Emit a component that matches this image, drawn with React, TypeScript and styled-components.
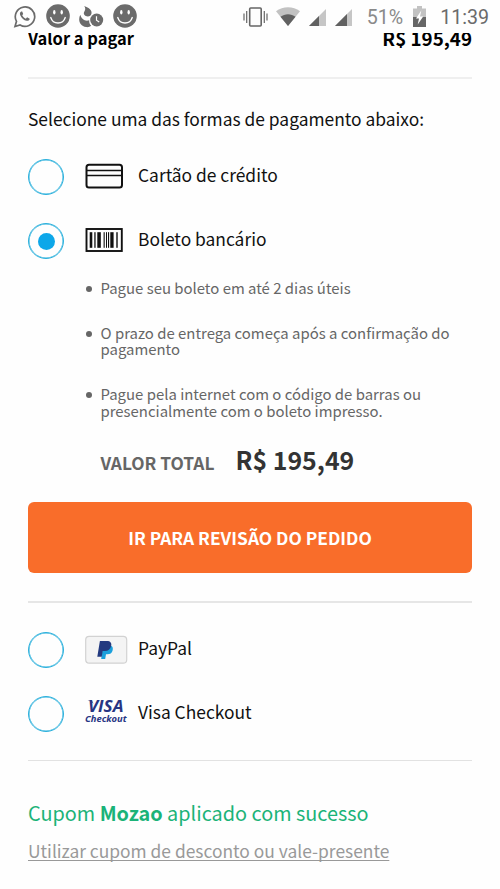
import React from 'react';
import styled, { createGlobalStyle } from 'styled-components';

const Global = createGlobalStyle`
  * { box-sizing: border-box; }
  html, body { margin: 0; padding: 0; background: #fefefe; }
  body { font-family: "Noto Sans CJK SC", "Noto Sans", sans-serif; color: #111; }
  svg { display: block; }
`;

const Page = styled.main`
  width: 500px;
  height: 889px;
  overflow: hidden;
  background: #fefefe;
`;

const StatusBar = styled.header`
  height: 33px;
  display: flex;
  justify-content: space-between;
  padding: 0 11px 0 13px;
  color: #6b6b6b;
`;

const StatusGroup = styled.div`
  display: flex;
  align-items: flex-start;
`;

const StatusIcon = styled.svg<{ $gap: number; $top: number }>`
  flex: none;
  margin: ${(p) => p.$top}px 0 0 ${(p) => p.$gap}px;
`;

const StatusText = styled.span<{ $gap: number; $color: string }>`
  font: 400 19.6px/35px Roboto, sans-serif;
  margin-left: ${(p) => p.$gap}px;
  color: ${(p) => p.$color};
`;

const Content = styled.div`
  padding: 0 28px;
`;

const Text = styled.span<{ $size: number; $weight?: number; $color?: string }>`
  display: block;
  white-space: nowrap;
  font-size: ${(p) => p.$size}px;
  font-weight: ${(p) => p.$weight ?? 400};
  color: ${(p) => p.$color ?? '#111'};
`;

const Summary = styled.div`
  height: 44px;
  overflow: hidden;
  display: flex;
  justify-content: space-between;
  line-height: 10px;
`;

const Divider = styled.hr<{ $height: number; $color: string; $space?: number }>`
  border: 0;
  margin: ${(p) => p.$space ?? 0}px 0;
  height: ${(p) => p.$height}px;
  background: ${(p) => p.$color};
`;

const Prompt = styled.div`
  padding-top: 26px;
  height: 80px;
  line-height: 28px;
`;

const Options = styled.div`
  display: grid;
  row-gap: 28px;
`;

const Option = styled.label`
  display: flex;
  align-items: center;
  height: 36px;
  line-height: 30px;
`;

const Radio = styled.span`
  display: grid;
  place-items: center;
  width: 36px;
  height: 36px;
  border: 1px solid #2ab0dc;
  box-shadow: inset 0 0 0 0.5px #2ab0dc;
  border-radius: 50%;
`;

const RadioDot = styled.i`
  width: 17px;
  height: 17px;
  border-radius: 50%;
  background: #0da7e9;
`;

const IconSlot = styled.span`
  width: 52px;
  margin-left: 21px;
  margin-right: 1px;
  height: 30px;
`;

const OptionLabel = styled.div`
  padding-bottom: 5px;
`;

const Details = styled.ul`
  list-style: none;
  margin: 21px 0 0;
  padding: 0 0 0 58px;
  display: grid;
  row-gap: 28px;
`;

const Detail = styled.li`
  display: grid;
  grid-template-columns: 14.5px 1fr;
  line-height: 16.7px;
`;

const Bullet = styled.i`
  width: 6px;
  height: 6px;
  border-radius: 50%;
  background: #666;
  margin-top: 6px;
`;

const Total = styled.div`
  display: flex;
  align-items: baseline;
  gap: 21px;
  padding-left: 72.5px;
  margin-top: 17px;
  line-height: 44px;
  height: 65px;
`;

const SubmitButton = styled.button`
  display: block;
  width: 444px;
  height: 71px;
  border: 0;
  padding: 0;
  border-radius: 6px;
  background: #f96d2a;
  font-family: inherit;
  text-align: center;
  line-height: 71px;
`;

const Coupon = styled.section`
  line-height: 30px;
  padding-top: 10px;
`;

const CouponLink = styled.a`
  display: block;
  margin-top: 7.4px;
  text-decoration: underline;
  text-decoration-color: #999;
  text-decoration-thickness: 1px;
  text-underline-offset: 2px;
  text-decoration-skip-ink: none;
  color: #999;
`;

const Smiley = ({ gap }: { gap: number }) => (
  <StatusIcon $gap={gap} $top={4} width="24" height="24" viewBox="0 0 24 24">
    <circle cx="12" cy="12" r="11.8" fill="#6b6b6b" />
    <ellipse cx="8.3" cy="8.3" rx="1.2" ry="2.2" fill="#fff" />
    <ellipse cx="15.7" cy="8.3" rx="1.2" ry="2.2" fill="#fff" />
    <path d="M4.8 13.6c1.1 3.5 3.9 5.4 7.2 5.4s6.1-1.9 7.2-5.4" fill="none" stroke="#fff" strokeWidth="1.5" strokeLinecap="round" />
  </StatusIcon>
);

const Signal = ({ gap, split }: { gap: number; split: number }) => (
  <StatusIcon $gap={gap} $top={9} width="17" height="17" viewBox="0 0 17 17">
    <path d="M0 17L17 0v17z" fill="#c6c6c6" />
    <path d={`M0 17L${split} ${17 - split}V17z`} fill="#616161" />
  </StatusIcon>
);

const CardIcon = () => (
  <svg width="38" height="30" viewBox="0 0 38 30" fill="none" stroke="#111">
    <rect x="1.5" y="2.7" width="35.5" height="22.7" rx="2.5" strokeWidth="2" />
    <path d="M2 8.5h35M2 13.5h35" strokeWidth="1.4" />
  </svg>
);

const barcode: [number, number][] = [
  [4.7, 2.6], [9.3, 1.3], [12.3, 3.5], [18.6, 1.1], [21, 1], [23, 1.1], [25.3, 3.3], [31.3, 1.4],
];

const BarcodeIcon = () => (
  <svg width="38" height="30" viewBox="0 0 38 30">
    <rect x="1.5" y="3" width="35.3" height="22" fill="none" stroke="#111" strokeWidth="1.9" />
    {barcode.map(([x, w]) => (
      <rect key={x} x={x} y="6.2" width={w} height="15.6" fill="#111" />
    ))}
  </svg>
);

const PayPalIcon = () => (
  <svg width="43" height="30" viewBox="0 0 43 30">
    <rect x="0.7" y="1.4" width="41" height="26.8" rx="3.5" fill="#f4f4f4" stroke="#d2d2d2" strokeWidth="1.2" />
    <path d="M18 10.5h6c3.3 0 4.4 2 3.6 4.9-.8 2.7-2.4 3.8-5.2 3.8H21l-.8 4.9h-4z" fill="#1ba0dc" />
    <path d="M14.9 6h6.8c3.8 0 5.3 2 4.4 5.2-.8 3.2-2.9 4.8-6.2 4.8h-2.2l-1 5.7h-4.4z" fill="#233a80" />
  </svg>
);

const VisaIcon = () => (
  <svg width="43" height="30" viewBox="0 0 43 30" fill="#273583">
    <path d="M2.6 1.6h4.2l1.8 3.2C6.8 3 5 2 2.6 1.6z" />
    <text x="3" y="13.2" fontFamily="Open Sans" fontWeight="700" fontStyle="italic" fontSize="16.5" textLength="35.5" lengthAdjust="spacingAndGlyphs">VISA</text>
    <text x="0" y="23.2" fontFamily="Open Sans" fontWeight="700" fontStyle="italic" fontSize="9.5" textLength="41.5" lengthAdjust="spacingAndGlyphs">Checkout</text>
  </svg>
);

type OptionProps = { label: string; icon: React.ReactNode; selected?: boolean };

const PaymentOption = ({ label, icon, selected }: OptionProps) => (
  <Option>
    <Radio>{selected && <RadioDot />}</Radio>
    <IconSlot>{icon}</IconSlot>
    <OptionLabel><Text $size={17.4}>{label}</Text></OptionLabel>
  </Option>
);

const details = [
  ['Pague seu boleto em até 2 dias úteis'],
  ['O prazo de entrega começa após a confirmação do', 'pagamento'],
  ['Pague pela internet com o código de barras ou', 'presencialmente com o boleto impresso.'],
];

export default function App() {
  return (
    <Page>
      <Global />
      <StatusBar>
        <StatusGroup>
          <StatusIcon $gap={0} $top={5} width="24" height="23" viewBox="0 0 24 23" fill="none" stroke="#6b6b6b">
            <path d="M2 21.5l1.5-5.2A9.7 9.7 0 1 1 7.1 20z" strokeWidth="1.7" />
            <path d="M8.2 6.4c-1.5.8-1.6 2.3-.8 4 1.4 2.9 3.5 4.7 6.2 5.4 1.6.3 3-.6 3.1-2.1l-2.6-1.4-1.3 1.4c-1.7-.7-2.9-1.8-3.6-3.4l1-1.2-1-2.7z" fill="#6b6b6b" stroke="none" />
          </StatusIcon>
          <Smiley gap={9} />
          <StatusIcon $gap={9} $top={6} width="25" height="22" viewBox="0 0 25 22" fill="#6b6b6b">
            <path d="M5.2 0c5 1.6 8 4.3 7.3 7.6-.5 2.4-3 3.7-5.8 2.5C4.5 9 4.3 7 5.6 5.1 6.6 3.5 6.4 1.8 5.2 0z" />
            <path d="M1.3 8.8c-2.6 5.2-.6 11.6 5.8 12.3 2.2.2 4-.3 5.1-1.3-1.6-1.6-2.2-3.2-2-5.6-3.6 1.6-7.7-.8-8.9-5.4z" />
            <circle cx="17.7" cy="14" r="6.5" />
            <path d="M17.5 10.3v4l2.7 1.8" fill="none" stroke="#fff" strokeWidth="1.2" />
          </StatusIcon>
          <Smiley gap={9} />
        </StatusGroup>
        <StatusGroup>
          <StatusIcon $gap={0} $top={7} width="25" height="20" viewBox="0 0 25 20" fill="none" stroke="#666">
            <rect x="6.7" y="1" width="11.5" height="18" rx="1" strokeWidth="1.6" />
            <path d="M1 6.5v7M3.7 4v12M21.3 4v12M24 6.5v7" strokeWidth="1.2" />
          </StatusIcon>
          <StatusIcon $gap={8} $top={7} width="24" height="19" viewBox="0 0 24 19">
            <path d="M0 4.3C7-1.2 17-1.2 24 4.3L12 19z" fill="#c2c2c2" />
            <path d="M4.5 9.7c4.4-3.4 10.6-3.4 15 0L12 19z" fill="#616161" />
          </StatusIcon>
          <Signal gap={9} split={10} />
          <Signal gap={9} split={12} />
          <StatusText $gap={15} $color="#8a8a8a">51%</StatusText>
          <StatusIcon $gap={10} $top={6} width="13" height="21" viewBox="0 0 13 21">
            <path d="M4 0h5v2.5h4V21H0V2.5h4z" fill="#c2c2c2" />
            <path d="M0 11h13v10H0z" fill="#666" />
            <path d="M8.3 4.5L3 12.5h3L4.7 18.5l5.5-8H7z" fill="#fff" />
          </StatusIcon>
          <StatusText $gap={14} $color="#6b6b6b">11:39</StatusText>
        </StatusGroup>
      </StatusBar>
      <Content>
        <Summary>
          <Text $size={16.5} $weight={700} $color="#000">Valor a pagar</Text>
          <Text $size={18.8} $weight={700} $color="#000">R$ 195,49</Text>
        </Summary>
        <Divider $height={2} $color="#efefef" />
        <Prompt><Text $size={17.4}>Selecione uma das formas de pagamento abaixo:</Text></Prompt>
        <Options>
          <PaymentOption label="Cartão de crédito" icon={<CardIcon />} />
          <PaymentOption label="Boleto bancário" icon={<BarcodeIcon />} selected />
        </Options>
        <Details>
          {details.map((lines) => (
            <Detail key={lines[0]}>
              <Bullet />
              <div>{lines.map((l) => <Text key={l} $size={14.92} $color="#666">{l}</Text>)}</div>
            </Detail>
          ))}
        </Details>
        <Total>
          <Text $size={17.3} $weight={700} $color="#666">VALOR TOTAL</Text>
          <Text $size={24.9} $weight={700} $color="#333">R$ 195,49</Text>
        </Total>
        <SubmitButton>
          <Text $size={17.35} $weight={700} $color="#fff">IR PARA REVISÃO DO PEDIDO</Text>
        </SubmitButton>
        <Divider $height={2} $color="#e6e6e6" $space={28.8} />
        <Options>
          <PaymentOption label="PayPal" icon={<PayPalIcon />} />
          <PaymentOption label="Visa Checkout" icon={<VisaIcon />} />
        </Options>
        <Divider $height={1} $color="#e2e2e2" $space={27.7} />
        <Coupon>
          <Text $size={19.85} $color="#1bb378">Cupom <b>Mozao</b> aplicado com sucesso</Text>
          <CouponLink><Text $size={17.4} $color="#999">Utilizar cupom de desconto ou vale-presente</Text></CouponLink>
        </Coupon>
      </Content>
    </Page>
  );
}
